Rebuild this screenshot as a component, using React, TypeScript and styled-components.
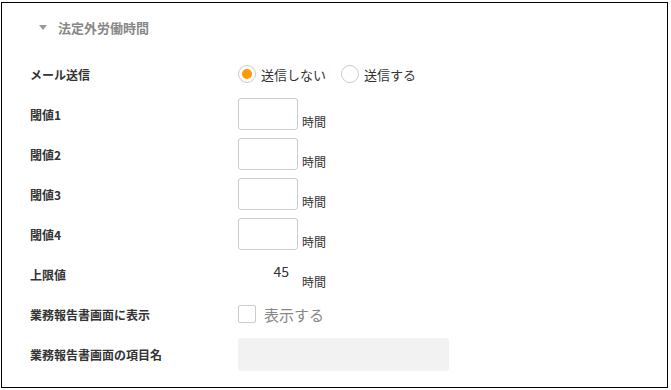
import styled, { createGlobalStyle } from "styled-components";

const GlobalStyle = createGlobalStyle`
  body {
    margin: 0;
    background: #fff;
    font-family: "Noto Sans CJK JP", "Noto Sans", sans-serif;
    color: #333;
  }
`;

const thresholds = ["閾値1", "閾値2", "閾値3", "閾値4"];

const App = () => {
  return (
    <>
      <GlobalStyle />
      <Frame>
        <SectionHeader>
          <Caret />
          <HeaderTitle>法定外労働時間</HeaderTitle>
        </SectionHeader>

        <Row>
          <Label>メール送信</Label>
          <Value>
            <RadioOption>
              <Radio checked />
              <OptionText>送信しない</OptionText>
            </RadioOption>
            <RadioOption>
              <Radio />
              <OptionText>送信する</OptionText>
            </RadioOption>
          </Value>
        </Row>

        {thresholds.map((label) => (
          <Row key={label}>
            <Label>{label}</Label>
            <Value $bottom>
              <HourInput />
              <Unit>時間</Unit>
            </Value>
          </Row>
        ))}

        <Row>
          <Label>上限値</Label>
          <Value $bottom>
            <Fixed>45</Fixed>
            <Unit>時間</Unit>
          </Value>
        </Row>

        <Row>
          <Label>業務報告書画面に表示</Label>
          <Value>
            <Checkbox />
            <CheckText>表示する</CheckText>
          </Value>
        </Row>

        <Row>
          <Label>業務報告書画面の項目名</Label>
          <Value>
            <DisabledField />
          </Value>
        </Row>
      </Frame>
    </>
  );
};

export default App;

const Frame = styled.div`
  box-sizing: border-box;
  width: 667px;
  height: 386px;
  margin: 2px 0 0 1px;
  border: 1px solid #000;
  padding: 0 0 0 28px;
  display: flex;
  flex-direction: column;
`;

const SectionHeader = styled.div`
  height: 51px;
  display: flex;
  align-items: center;
  gap: 11px;
  padding: 0 0 3px 9px;
  box-sizing: border-box;
`;

const Caret = styled.span`
  width: 0;
  height: 0;
  border-left: 4px solid transparent;
  border-right: 4px solid transparent;
  border-top: 5px solid #999;
`;

const HeaderTitle = styled.span`
  font-size: 13px;
  font-weight: bold;
  color: #888;
`;

const Row = styled.div`
  height: 40px;
  display: flex;
  align-items: center;
`;

const Label = styled.div`
  width: 208px;
  font-size: 12px;
  font-weight: bold;
  color: #333;
`;

const Value = styled.div<{ $bottom?: boolean }>`
  display: flex;
  align-items: ${(p) => (p.$bottom ? "flex-end" : "center")};
`;

const RadioOption = styled.label`
  display: flex;
  align-items: center;
  margin-right: 15px;
`;

const Radio = styled.span<{ checked?: boolean }>`
  box-sizing: border-box;
  width: 18px;
  height: 18px;
  border-radius: 50%;
  border: 1px solid #ccc;
  background: #fff;
  display: flex;
  align-items: center;
  justify-content: center;

  &::after {
    content: "";
    display: ${(p) => (p.checked ? "block" : "none")};
    width: 10px;
    height: 10px;
    border-radius: 50%;
    background: #f90;
  }
`;

const OptionText = styled.span`
  font-size: 13px;
  margin-left: 5px;
  color: #333;
`;

const HourInput = styled.div`
  box-sizing: border-box;
  width: 60px;
  height: 32px;
  border: 1px solid #ccc;
  border-radius: 3px;
  background: #fff;
`;

const Fixed = styled.div`
  box-sizing: border-box;
  width: 60px;
  height: 32px;
  padding: 0 9px 6px 0;
  font-size: 14px;
  color: #333;
  display: flex;
  align-items: center;
  justify-content: flex-end;
`;

const Unit = styled.span`
  font-size: 12px;
  color: #333;
  margin-left: 4px;
  line-height: 14px;
  margin-bottom: 1px;
`;

const Checkbox = styled.span`
  box-sizing: border-box;
  width: 18px;
  height: 18px;
  border: 1px solid #ccc;
  border-radius: 2px;
  background: #fff;
`;

const CheckText = styled.span`
  font-size: 15px;
  color: #888;
  margin-left: 8px;
`;

const DisabledField = styled.div`
  width: 211px;
  height: 33px;
  border-radius: 3px;
  background: #f2f2f2;
`;
